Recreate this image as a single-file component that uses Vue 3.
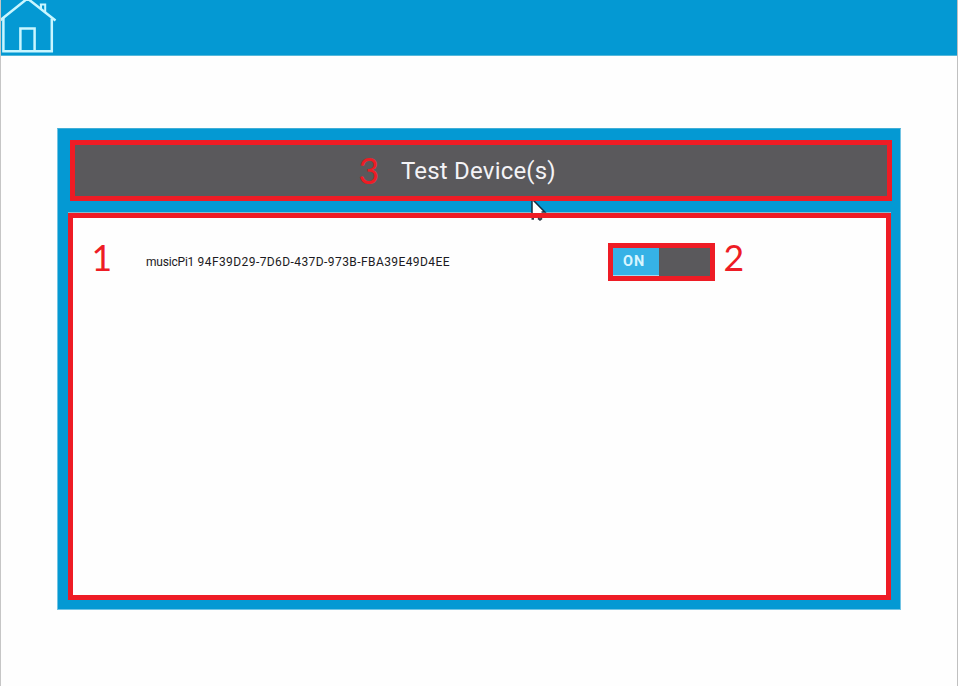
<script setup>
import { ref } from 'vue'

const on = ref(true)
const device = { name: 'musicPi1', id: '94F39D29-7D6D-437D-973B-FBA39E49D4EE' }
</script>

<template>
  <div class="screen">
    <header class="topbar">
      <svg class="home" width="58" height="55" viewBox="0 0 58 55" aria-label="Home">
        <g fill="none" stroke="#c9f6ff" stroke-width="2.5">
          <path d="M0 20.5 L27.5 -1.5 L55.5 20.5" />
          <path d="M3.4 18 V51.2 H51.8 V18.5" />
          <path d="M20.4 51 V28.4 H34.6 V51" />
          <path d="M39.8 4.4 H46.2 M41 4.4 V9 M45.2 4.4 V12" stroke-width="2" />
        </g>
      </svg>
    </header>

    <main class="panel">
      <div class="title">
        <span class="mark mark-three">3</span>
        <h1>Test Device(s)</h1>
      </div>
      <section class="list">
        <div class="row">
          <span class="mark mark-one">1</span>
          <span class="device"><span class="name">{{ device.name }}</span> {{ device.id }}</span>
          <button class="toggle" @click="on = !on">
            <span class="state">{{ on ? 'ON' : 'OFF' }}</span>
          </button>
          <span class="mark mark-two">2</span>
        </div>
      </section>
      <svg class="cursor" width="16" height="20" viewBox="0 0 16 20">
        <path d="M1 -1 V12 H13.5 V10.8 L2 -1 Z" fill="#fff" />
        <path d="M1 0 V12 M2.5 -0.5 L13.8 11 H10.5" fill="none" stroke="#142c40" stroke-width="1.5" />
        <path d="M0.5 17.8 H3 M7 17.3 L9 18.8 L11 17.3" fill="none" stroke="#333b49" stroke-width="1.8" />
      </svg>
    </main>
  </div>
</template>

<style>
body {
  margin: 0;
  background: #fefefe;
}
</style>

<style scoped>
.screen {
  box-sizing: border-box;
  width: 958px;
  height: 686px;
  border-left: 1px solid #c6c6c6;
  border-right: 1px solid #c0c0c0;
  background: #fefefe;
  overflow: hidden;
  font-family: Roboto, sans-serif;
}
.topbar {
  box-sizing: border-box;
  height: 56px;
  background: #0499d3;
  border-bottom: 1px solid #55b8da;
}
.home {
  display: block;
  margin-left: -1px;
}
.panel {
  position: relative;
  box-sizing: border-box;
  width: 844px;
  height: 482px;
  margin: 72px 0 0 56px;
  padding: 11px 8px 9px 10px;
  border: 1px solid #72c4e4;
  border-top-color: #40aed7;
  background: #0499d3;
}
.title {
  box-sizing: border-box;
  display: flex;
  align-items: center;
  width: 822px;
  height: 61px;
  margin-left: 2px;
  padding-left: 283px;
  border: 5px solid #ee1c25;
  background: #5a595c;
}
h1 {
  margin: 0 0 0 22px;
  color: #f4f3f6;
  font-size: 24px;
  font-weight: 400;
  line-height: 30px;
  letter-spacing: 0.2px;
  white-space: nowrap;
}
.mark {
  flex: none;
  width: 21px;
  color: #ee1c25;
  font-family: Lato, sans-serif;
  font-size: 37.5px;
  line-height: 40px;
  transform: scaleX(0.95);
}
.mark-three {
  margin-top: -1px;
}
.mark-one,
.mark-two {
  margin-bottom: 10px;
}
.list {
  box-sizing: border-box;
  width: 823px;
  height: 387px;
  margin-top: 12px;
  padding-top: 25px;
  border: 5px solid #ee1c25;
  box-shadow: 0 -1px 0 #83bdd0;
  background: #fefefe;
}
.row {
  display: flex;
  align-items: center;
  height: 38px;
  padding-left: 18px;
}
.device {
  width: 462px;
  margin-left: 34px;
  color: #1c1a22;
  font-size: 12px;
  line-height: 16px;
  letter-spacing: 0.42px;
  white-space: nowrap;
}
.name {
  letter-spacing: -0.2px;
}
.toggle {
  box-sizing: border-box;
  display: flex;
  flex: none;
  width: 107px;
  height: 38px;
  padding: 0;
  border: 5px solid #ee1c25;
  border-radius: 0;
  background: #5a595c;
}
.state {
  box-sizing: border-box;
  width: 46px;
  height: 28px;
  padding-left: 10px;
  border-bottom: 1px solid #a2d9f0;
  background: #36b2e6;
  color: #d9f6ff;
  font: 700 14.5px/28px Roboto, sans-serif;
  letter-spacing: 1px;
  text-align: left;
}
.mark-two {
  margin-left: 8px;
}
.cursor {
  position: absolute;
  left: 473px;
  top: 72px;
}
</style>
